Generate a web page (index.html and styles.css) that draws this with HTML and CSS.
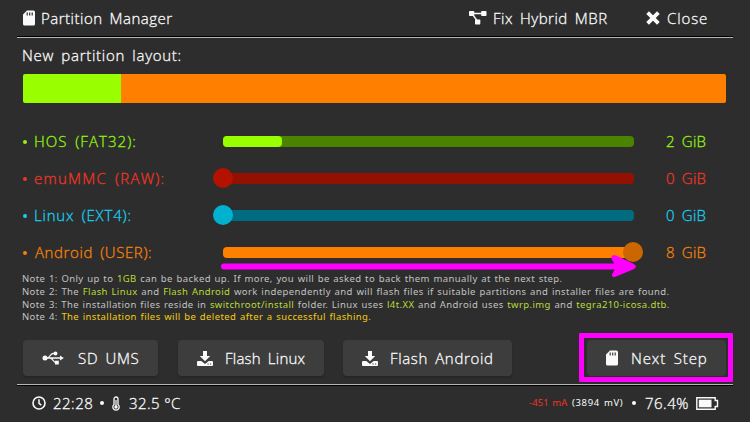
FILE: index.html
```html
<!DOCTYPE html>
<html lang="en">
<head>
<meta charset="utf-8">
<title>Partition Manager</title>
<link rel="stylesheet" href="styles.css">
</head>
<body>
<svg class="defs" aria-hidden="true">
  <symbol id="sd" viewBox="0 0 12 16"><path fill-rule="evenodd" d="M4 .5h6.500Q12 .5 12 2v12q0 1.500-1.500 1.500h-9Q0 15.500 0 14V4.500zM3.600 2.500v3h1.200v-3zm2.500 0v3h1.200v-3zm2.500 0v3h1.200v-3z"/></symbol>
  <symbol id="download" viewBox="0 0 16 15"><path fill-rule="evenodd" d="M6 0h4v5h3.200L8 10.300 2.800 5H6zM1 10h3.300L8 13l3.700-3H15q1 0 1 1v3q0 1-1 1H1q-1 0-1-1v-3q0-1 1-1zM10.500 12.500v1h1.200v-1zm2.500 0v1h1.200v-1z"/></symbol>
</svg>
<div class="app">
  <header class="header">
    <div class="item title"><svg class="sd"><use href="#sd"/></svg><span>Partition Manager</span></div>
    <div class="item fix"><svg class="hybrid" viewBox="0 0 18 14"><path d="M4 2.500h9M4 4l5 7" fill="none" stroke="currentColor" stroke-width="1.300"/><rect width="5.300" height="5" rx=".7"/><rect x="12.200" width="5.300" height="5" rx=".7"/><rect x="6" y="8.500" width="5.300" height="5" rx=".7"/></svg><span>Fix Hybrid MBR</span></div>
    <div class="item close"><svg class="cross" viewBox="0 0 13 13"><path d="M1.500 1.500l10 10M11.500 1.500l-10 10" fill="none" stroke="currentColor" stroke-width="3.500"/></svg><span>Close</span></div>
  </header>
  <main class="main">
    <h1 class="heading">New partition layout:</h1>
    <div class="layout"><div class="hos-part"></div><div class="android-part"></div></div>
    <div class="sliders">
      <div class="row hos"><span class="bullet"></span><span class="label">HOS (FAT32):</span><div class="track"><div class="fill"></div></div><span class="value">2 GiB</span></div>
      <div class="row emu"><span class="bullet"></span><span class="label">emuMMC (RAW):</span><div class="track"><div class="knob"></div></div><span class="value">0 GiB</span></div>
      <div class="row linux"><span class="bullet"></span><span class="label">Linux (EXT4):</span><div class="track"><div class="knob"></div></div><span class="value">0 GiB</span></div>
      <div class="row android"><span class="bullet"></span><span class="label">Android (USER):</span><div class="track"><div class="knob"></div></div><span class="value">8 GiB</span></div>
      <svg class="arrow" viewBox="0 0 416 24"><path d="M4 12.500H402" stroke="#f0f" stroke-width="6" stroke-linecap="round"/><path d="M392.500 1.500Q394 .5 396 1.500L413 9.500q3 1.500 3 3t-3 3L396 22.500q-2 1-3.500 0-1.500-1.500 0-3L396 12.500 391.500 5q-1-2 1-3.500z" fill="#f0f"/></svg>
    </div>
    <div class="notes">
      <p class="n1">Note 1: Only up to <b>1GB</b> can be backed up. If more, you will be asked to back them manually at the next step.</p>
      <p class="n2">Note 2: The <b>Flash Linux</b> and <b>Flash Android</b> work independently and will flash files if suitable partitions and installer files are found.</p>
      <p class="n3">Note 3: The installation files reside in <b>switchroot/install</b> folder. Linux uses <b>l4t.XX</b> and Android uses <b>twrp.img</b> and <b>tegra210-icosa.dtb</b>.</p>
      <p class="n4">Note 4: <em>The installation files will be deleted after a successful flashing.</em></p>
    </div>
    <div class="buttons">
      <button class="btn ums"><svg class="usb" viewBox="0 0 22 14"><path d="M3 7h16M5 7c3 0 3-4.500 6-4.500h2M8 7c3 0 3 4.500 6 4.500h1" fill="none" stroke="currentColor" stroke-width="1.300"/><circle cx="3" cy="7" r="2.500"/><circle cx="13.500" cy="2.500" r="1.900"/><rect x="13" y="9.700" width="3.800" height="3.800"/><path d="M18 4.500 21.800 7 18 9.500z"/></svg><span>SD UMS</span></button>
      <button class="btn fl"><svg class="down"><use href="#download"/></svg><span>Flash Linux</span></button>
      <button class="btn fa"><svg class="down"><use href="#download"/></svg><span>Flash Android</span></button>
      <button class="btn next"><svg class="sd"><use href="#sd"/></svg><span>Next Step</span></button>
    </div>
  </main>
  <footer class="footer">
    <svg class="clock" viewBox="0 0 14 14"><circle cx="7" cy="7" r="6" fill="none" stroke="currentColor" stroke-width="1.600"/><path d="M7 3.300v4l2.300 1.800" fill="none" stroke="currentColor" stroke-width="1.500"/></svg>
    <span class="time">22:28</span><span class="dot"></span>
    <svg class="thermo" viewBox="0 0 8 15"><path d="M2 8.500V3a2 2 0 0 1 4 0v5.500a3.200 3.200 0 1 1-4 0z" fill="none" stroke="currentColor" stroke-width="1.300"/><circle cx="4" cy="11" r="1.700"/><path d="M3.400 4h1.200v7H3.400z"/></svg>
    <span class="temp">32.5 °C</span>
    <span class="amp">-451 mA</span><span class="volt">(3894 mV)</span><span class="dot"></span><span class="pct">76.4%</span>
    <svg class="battery" viewBox="0 0 23 13"><path d="M1.500.8h17.700v2.700h2.300v6h-2.300v2.700H.8V.8z" fill="none" stroke="currentColor" stroke-width="1.400"/><path d="M2.800 2.700h12.700v7.600H2.800z"/></svg>
  </footer>
  <div class="highlight"></div>
</div>
</body>
</html>
```
FILE: styles.css
```css
* { box-sizing: border-box; }
body { margin: 0; background: #2d2d2d; color: #fafafa; font: 300 15px/20px "Open Sans", "Noto Sans", sans-serif; word-spacing: 2.700px; letter-spacing: .5px; -webkit-text-stroke: .3px currentColor; }
svg { display: block; flex: none; fill: currentColor; }
.defs { position: absolute; width: 0; height: 0; }
.app { position: relative; width: 750px; height: 422px; overflow: hidden; display: flex; flex-direction: column; }
span, h1, p { white-space: nowrap; }
.header { height: 38px; margin: 0 17px; padding: 0 0 1px 6px; display: flex; align-items: center; border-bottom: 1px solid #b5b5b5; box-shadow: inset 0 -1px #000; }
.item { display: flex; align-items: center; }
.title { width: 446px; }
.sd { width: 12px; height: 16px; }
.title .sd { margin-right: 6px; }
.hybrid { width: 18px; height: 14px; margin-right: 6px; }
.fix { width: 177px; }
.cross { width: 14px; height: 14px; margin-right: 7px; }
.close { letter-spacing: .9px; }
.main { height: 346px; padding: 8px 24px 0 23px; }
.heading { margin: -1px 0 0 -1px; height: 29px; font: inherit; letter-spacing: .72px; }
.layout { height: 29px; display: flex; border-radius: 2px; overflow: hidden; }
.hos-part { width: 98px; background: #9f0; }
.android-part { flex: 1; background: #ff8000; }
.sliders { position: relative; margin-top: 20px; }
.row { height: 37px; display: grid; grid-template-columns: 11px 189px 411px 1fr; align-items: center; }
.bullet { width: 4px; height: 4px; border-radius: 50%; background: currentColor; }
.label, .value { padding-bottom: 2px; }
.track { position: relative; height: 11px; border-radius: 4px; }
.fill { width: 59px; height: 11px; border-radius: 4px; background: #9f0; }
.knob { position: absolute; left: -10px; top: -5px; width: 20px; height: 20px; border-radius: 50%; }
.value { padding-left: 32px; letter-spacing: .3px; }
.hos { color: #94f20c; }
.hos .label { letter-spacing: 1.050px; }
.hos .track { background: #4b8200; }
.emu { color: #ef3526; }
.emu .label { letter-spacing: 1.250px; }
.emu .track { background: #941000; }
.emu .knob { background: #b41200; }
.linux { color: #16cff0; }
.linux .label { letter-spacing: .8px; }
.linux .track { background: #006c82; }
.linux .knob { background: #00b2d0; }
.android { color: #f58108; }
.android .label { padding-left: 1px; letter-spacing: .6px; }
.android .track { background: #ff8000; }
.android .knob { left: 400px; background: #cc6600; }
.arrow { position: absolute; left: 197px; top: 131px; width: 416px; height: 24px; }
.notes { height: 69px; padding-top: 2px; font: 400 9.500px/12.800px "Noto Sans", sans-serif; color: #c2c2c2; -webkit-text-stroke: 0; }
.notes p { margin: 0 0 0 -1px; letter-spacing: .4px; word-spacing: .75px; }
.notes .n3 { word-spacing: .7px; }
.notes b { font-weight: 400; color: #b8dc38; }
.notes em { font-style: normal; color: #f2cc13; }
.buttons { display: flex; }
.btn { height: 36px; padding: 0; display: flex; align-items: center; border: 0; border-radius: 4px; background: #3d3d3d; color: inherit; font: inherit; letter-spacing: inherit; word-spacing: inherit; box-shadow: 0 2px 2px #262626; }
.btn span { padding-bottom: 1px; }
.ums { width: 135px; padding-left: 19px; margin-right: 20px; letter-spacing: .7px; }
.fl { width: 146px; padding-left: 19px; margin-right: 19px; letter-spacing: .25px; }
.fa { width: 169px; padding-left: 19px; letter-spacing: .65px; }
.next { width: 139px; padding-left: 19px; margin-left: auto; letter-spacing: .9px; box-shadow: none; }
.usb { width: 22px; height: 14px; margin-right: 14px; }
.down { width: 16px; height: 15px; margin-right: 12px; }
.next .sd { margin-right: 13px; }
.footer { height: 38px; margin: 0 17px; padding: 0 0 1px 15px; display: flex; align-items: center; border-top: 1px solid #b5b5b5; box-shadow: inset 0 1px #000; }
.clock { width: 14px; height: 14px; margin-right: 7px; }
.dot { width: 4px; height: 4px; border-radius: 50%; background: currentColor; flex: none; }
.time { width: 47px; }
.thermo { width: 8px; height: 15px; margin: 0 9px 0 8px; }
.temp { word-spacing: 0; letter-spacing: .4px; }
.amp, .volt { font: 400 9.500px/16px "Noto Sans", sans-serif; word-spacing: 1px; -webkit-text-stroke: 0; }
.amp { margin-left: auto; width: 43px; color: #ef3526; letter-spacing: .1px; }
.volt { width: 61px; letter-spacing: .65px; }
.amp, .volt { position: relative; left: 1px; }
.pct { width: 51px; margin-left: 9px; }
.battery { width: 23px; height: 13px; margin-right: 14px; }
.highlight { position: absolute; left: 579px; top: 333px; width: 154px; height: 49px; border: 5px solid #f0f; border-radius: 1px; }
```
